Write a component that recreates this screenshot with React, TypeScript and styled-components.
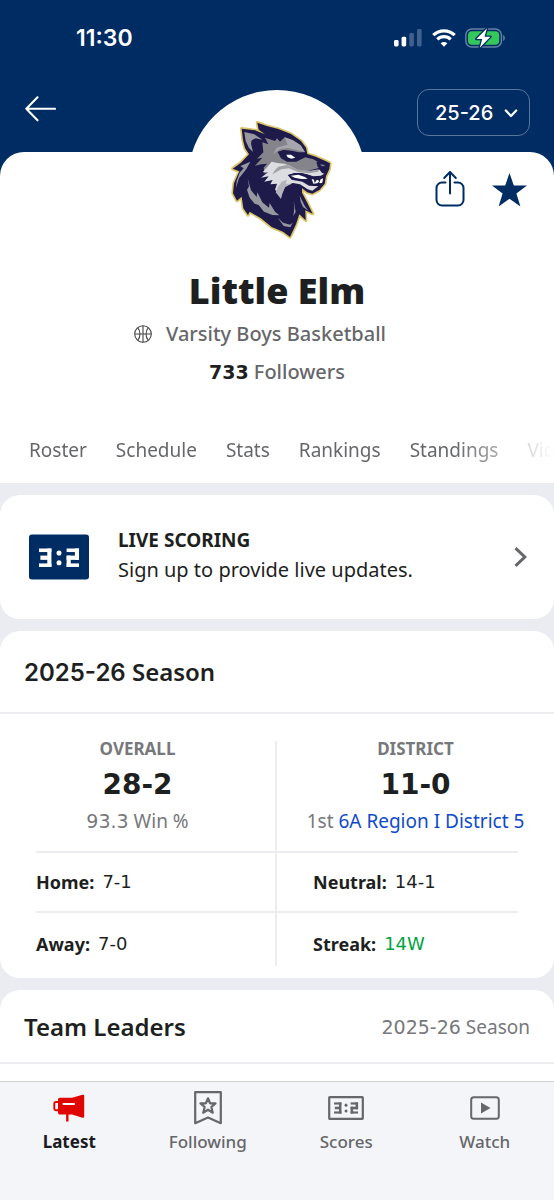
import React from "react";
import styled, { createGlobalStyle } from "styled-components";

const navy = "#002c64";
const ink = "#1e1f21";
const grey = "#66676a";
const softGrey = "#77787b";
const line = "#ededf1";
const backdrop = "#ebecf1";
const wideFigures = `"DejaVu Sans", sans-serif`;
const headingFigures = "Inter, sans-serif";

const GlobalStyle = createGlobalStyle`
  * { box-sizing: border-box; }
  body {
    margin: 0;
    background: ${backdrop};
    color: ${ink};
    font-family: "Noto Sans", "Open Sans", sans-serif;
    font-size: 18px;
    line-height: 24px;
  }
  h1, h2, p, dl, dt, dd { margin: 0; padding: 0; }
  button, select { font: inherit; color: inherit; }
  button { background: none; border: 0; padding: 0; cursor: pointer; }
  a { color: inherit; text-decoration: none; }
  svg { display: block; }
`;

const Page = styled.div`
  display: flex;
  flex-direction: column;
  min-height: 100vh;
`;

const Header = styled.header`
  background: ${navy};
  color: #fff;
`;

const StatusBar = styled.div`
  display: flex;
  align-items: center;
  justify-content: space-between;
  height: 76px;
  padding: 0 48px 0 76px;
`;

const Clock = styled.span`
  font-family: Inter, sans-serif;
  font-size: 23px;
  font-weight: 600;
`;

const StatusIcons = styled.div`
  display: flex;
  align-items: center;
  gap: 9px;
`;

const NavRow = styled.div`
  display: flex;
  align-items: flex-start;
  justify-content: space-between;
  height: 76px;
  padding: 13px 24px 0;
`;

const BackButton = styled.button`
  padding: 7px 0;
`;

const SeasonPicker = styled.label`
  display: flex;
  align-items: center;
  width: 113px;
  height: 47px;
  padding: 0 11px 0 17px;
  border: 1px solid #5a769c;
  border-radius: 12px;
`;

const SeasonSelect = styled.select`
  flex: 1;
  min-width: 0;
  padding: 0;
  border: 0;
  appearance: none;
  background: transparent;
  font-family: ${headingFigures};
  font-size: 20px;
  font-weight: 500;
`;

const HeroBackdrop = styled.div`
  background: linear-gradient(${navy} 50%, ${backdrop} 50%);
`;

const Hero = styled.section`
  padding-bottom: 16px;
  border-radius: 24px 24px 0 0;
  background: #fff;
  text-align: center;
`;

const HeroTop = styled.div`
  display: grid;
  grid-template-columns: 1fr 178px 1fr;
  height: 118px;
`;

const Crest = styled.div`
  grid-column: 2;
  width: 178px;
  height: 178px;
  margin-top: -62px;
  padding: 25px 0 0 37px;
  border-radius: 50%;
  background: #fff;
`;

const Actions = styled.div`
  display: flex;
  align-items: center;
  align-self: start;
  justify-content: flex-end;
  gap: 27px;
  padding: 18px 27px 0 0;
`;

const TeamName = styled.h1`
  font-size: 36px;
  font-weight: 900;
  line-height: 42px;
`;

const Sport = styled.p`
  display: flex;
  align-items: center;
  justify-content: center;
  gap: 14px;
  margin-top: 10px;
  padding-right: 34px;
  color: ${grey};
  font-size: 20px;
  font-weight: 500;
`;

const Followers = styled.p`
  margin-top: 14px;
  color: ${grey};
  font-size: 20px;
  font-weight: 500;

  strong {
    color: ${ink};
    font-family: ${wideFigures};
    font-size: 19px;
    font-weight: 700;
  }
`;

const Tabs = styled.nav`
  display: flex;
  gap: 29px;
  margin-top: 54px;
  padding: 0 0 5px 29px;
  overflow: hidden;
  color: ${grey};
  font-size: 19px;
  mask-image: linear-gradient(to right, #000 calc(100% - 100px), transparent);

  a { flex: none; }
`;

const Feed = styled.main`
  display: flex;
  flex: 1;
  flex-direction: column;
  gap: 12px;
  padding-top: 12px;
`;

const Card = styled.section<{ $last?: boolean }>`
  flex: ${(p) => (p.$last ? "1 0 auto" : "none")};
  border-radius: ${(p) => (p.$last ? "20px 20px 0 0" : "20px")};
  background: #fff;
`;

const LiveLink = styled.a`
  display: flex;
  align-items: center;
  gap: 29px;
  min-height: 124px;
  padding: 0 26px 0 29px;
`;

const LiveText = styled.div`
  flex: 1;
  padding-bottom: 4px;
  font-size: 20px;
  line-height: 30px;

  strong {
    display: block;
    font-size: 19px;
    font-weight: 700;
  }
`;

const CardHead = styled.div<{ $compact?: boolean }>`
  display: flex;
  align-items: center;
  justify-content: space-between;
  height: ${(p) => (p.$compact ? "74px" : "83px")};
  padding: 2px 24px 0;
  border-bottom: 2px solid ${line};
  color: ${softGrey};
`;

const CardTitle = styled.h2`
  color: ${ink};
  font-size: 24px;
  font-weight: 600;
  line-height: 32px;
`;

const HeadingFigures = styled.span`
  font-family: ${headingFigures};
`;

const Note = styled.span`
  font-size: 19px;

  a { color: #0f4bc8; }
`;

const Figures = styled.span`
  font-family: ${wideFigures};
`;

const Record = styled.div`
  display: grid;
  grid-template-columns: 1fr 1fr;
  padding: 27px 0 12px;
`;

const Column = styled.div<{ $side: "left" | "right" }>`
  padding: ${(p) => (p.$side === "left" ? "0 0 0 36px" : "0 36px 0 0")};
  border-right: ${(p) => (p.$side === "left" ? `2px solid ${line}` : "0")};
`;

const Summary = styled.div<{ $side: "left" | "right" }>`
  display: flex;
  flex-direction: column;
  align-items: center;
  height: 110px;
  margin: ${(p) => (p.$side === "left" ? "0 0 0 -36px" : "0 -36px 0 0")};
  color: ${softGrey};
  white-space: nowrap;
`;

const SummaryLabel = styled.span`
  font-size: 17px;
  font-weight: 700;
  line-height: 16px;
`;

const SummaryValue = styled.strong`
  margin: 9px 0 5px;
  color: ${ink};
  font-family: ${wideFigures};
  font-size: 28px;
  font-weight: 700;
  line-height: 38px;
`;

const Split = styled.dl<{ $side: "left" | "right" }>`
  display: flex;
  align-items: center;
  gap: 8px;
  height: 60px;
  padding-left: ${(p) => (p.$side === "left" ? "0" : "36px")};
  border-top: 2px solid ${line};

  &:last-child {
    height: 55px;
    padding-top: 9px;
  }

  dt { font-weight: 700; }
`;

const Result = styled.dd<{ $win?: boolean }>`
  color: ${(p) => (p.$win ? "#00a33e" : ink)};
  font-family: ${wideFigures};
`;

const TabBar = styled.nav`
  position: sticky;
  bottom: 0;
  display: grid;
  grid-template-columns: repeat(4, 1fr);
  height: 119px;
  padding-top: 8px;
  border-top: 1px solid #cfd0d4;
  background: #f4f5f8;
`;

const TabItem = styled.a<{ $active?: boolean }>`
  display: flex;
  flex-direction: column;
  align-items: center;
  gap: 5px;
  color: ${(p) => (p.$active ? "#1a1a1f" : grey)};
  font-size: 17px;
  font-weight: ${(p) => (p.$active ? 700 : 500)};
`;

const IconSlot = styled.span`
  display: flex;
  align-items: center;
  justify-content: center;
  height: 35px;
`;

/* Scoreboard digits: bars listed as x, y, width, height on a 9 x 13 face */
const THREE = [[0, 0, 9, 2.5], [6, 0, 3, 13], [1, 5, 6, 3], [0, 10.5, 9, 2.5]];
const TWO = [[0, 0, 9, 2.5], [6, 0, 3, 8], [0, 5, 9, 3], [0, 5, 3, 8], [0, 10.5, 9, 2.5]];

const Segments = ({ bars, x }: { bars: number[][]; x: number }) => (
  <g transform={`translate(${x} 0)`}>
    {bars.map(([bx, by, w, h], i) => <rect key={i} x={bx} y={by} width={w} height={h} />)}
  </g>
);

const ScoreFace = () => (
  <>
    <Segments bars={THREE} x={0} />
    <circle cx="14.5" cy="3.2" r="1.8" />
    <circle cx="14.5" cy="10" r="1.8" />
    <Segments bars={TWO} x={20} />
  </>
);

const ScoreBadge = () => (
  <svg width="60" height="46" viewBox="0 0 60 46" role="img" aria-label="Scoreboard">
    <rect y=".5" width="60" height="45" rx="3" fill={navy} />
    <g transform="translate(10 14.5) scale(1.38 1.42)" fill="#fff"><ScoreFace /></g>
  </svg>
);

const ScoresIcon = () => (
  <svg width="36" height="24" viewBox="0 0 36 24" fill="none" aria-hidden="true">
    <rect x="1.2" y="1.2" width="33.6" height="21.6" rx=".6" stroke={grey} strokeWidth="2.2" />
    <g transform="translate(6 6.4) scale(.83 .86)" fill={grey}><ScoreFace /></g>
  </svg>
);

const SignalIcon = () => (
  <svg width="29" height="18" viewBox="0 0 29 18" fill="#fff" aria-hidden="true">
    <rect x="0" y="11" width="4.6" height="6.5" rx="1.4" />
    <rect x="7.6" y="7.8" width="4.6" height="9.7" rx="1.4" />
    <rect x="15.3" y="4" width="4.6" height="13.5" rx="1.4" opacity=".25" />
    <rect x="23" y="0" width="4.6" height="17.5" rx="1.4" opacity=".25" />
  </svg>
);

const WifiIcon = () => (
  <svg width="24" height="18" viewBox="0 0 24 18" fill="none" stroke="#fff" strokeWidth="3.2" aria-hidden="true">
    <path d="M1.3 6.2a15.2 15.2 0 0 1 21.4 0" />
    <path d="M5.3 10.3a9.5 9.5 0 0 1 13.4 0" />
    <path d="M12 17.8l-3.4-3.5a4.9 4.9 0 0 1 6.8 0z" fill="#fff" stroke="none" />
  </svg>
);

const BatteryIcon = () => (
  <svg width="41" height="20" viewBox="0 0 41 20" fill="none" aria-hidden="true">
    <rect x=".8" y="1" width="35.6" height="18" rx="6" stroke="#6580a3" strokeWidth="1.5" />
    <path d="M38.2 7v6c2.2-.8 2.2-5.2 0-6z" fill="#6580a3" />
    <rect x="3" y="3.2" width="31.2" height="13.6" rx="4" fill="#34c759" />
    <path d="M22 .2L11.4 11h5.8l-2.4 8.8L25.4 8.7h-5.9z" fill="#fff" stroke={navy} strokeWidth="2.6" strokeLinejoin="round" paintOrder="stroke" />
  </svg>
);

const BackIcon = () => (
  <svg width="32" height="26" viewBox="0 0 32 26" fill="none" stroke="#fff" strokeWidth="2.1" strokeLinecap="round" strokeLinejoin="round" aria-hidden="true">
    <path d="M31 12.8H2.3M13.5 1.3L2.3 12.8l11.2 11.5" />
  </svg>
);

const DownIcon = () => (
  <svg width="14" height="10" viewBox="0 0 14 10" fill="none" stroke="#fff" strokeWidth="2.3" strokeLinecap="round" strokeLinejoin="round" aria-hidden="true">
    <path d="M1.8 2.5L7 8l5.2-5.5" />
  </svg>
);

const ShareIcon = () => (
  <svg width="30" height="38" viewBox="0 0 30 38" fill="none" stroke={navy} strokeWidth="2" strokeLinecap="round" strokeLinejoin="round" aria-hidden="true">
    <path d="M10.5 12.5H7A5.500 5.500 0 0 0 1.500 18v12A5.500 5.500 0 0 0 7 35.500h16a5.500 5.500 0 0 0 5.500-5.500V18a5.500 5.500 0 0 0-5.500-5.500h-3.500" />
    <path d="M15 23.5V2M9.200 8L15 2l5.800 6" />
  </svg>
);

const StarIcon = () => (
  <svg width="35" height="36" viewBox="0 0 35 36" fill={navy} aria-hidden="true">
    <path d="M17.500 2l4.300 12.600H35L24.400 22.500l4 13.100-10.900-7.900-10.900 7.900 4-13.100L0 14.600h13.200z" />
  </svg>
);

const BallIcon = () => (
  <svg width="18" height="18" viewBox="0 0 18 18" fill="none" stroke="#444548" strokeWidth="1.1" aria-hidden="true">
    <circle cx="9" cy="9" r="8.3" />
    <path d="M9 .7v16.600M.7 9h16.600M3.800 2.800c2.900 3.200 2.900 9.200 0 12.400M14.200 2.800c-2.900 3.200-2.900 9.200 0 12.400" />
  </svg>
);

const NextIcon = () => (
  <svg width="14" height="20" viewBox="0 0 14 20" fill="none" stroke={grey} strokeWidth="3" aria-hidden="true">
    <path d="M1.5 1.2l9.300 8.800-9.300 8.800" />
  </svg>
);

const MegaphoneIcon = () => (
  <svg width="32" height="28" viewBox="0 0 32 28" fill="none" aria-hidden="true">
    <path d="M6 8H2.800a1.500 1.500 0 0 0-1.500 1.500v5.300a1.500 1.500 0 0 0 1.500 1.500H6" stroke="#e10500" strokeWidth="1.9" />
    <path d="M6.800 3.800H19L29.500.8a1.300 1.300 0 0 1 1.700 1.200v20.500a1.300 1.300 0 0 1-1.700 1.200L19 20.500H6.800A1.800 1.800 0 0 1 5 18.700V5.600a1.800 1.800 0 0 1 1.800-1.800z" fill="#e10500" />
    <path d="M10.500 10h10.500" stroke="#fff" strokeWidth="2.2" strokeLinecap="round" />
    <path d="M14.300 20v7.500" stroke="#e10500" strokeWidth="2.4" />
  </svg>
);

const FollowingIcon = () => (
  <svg width="28" height="34" viewBox="0 0 28 34" fill="none" stroke={grey} strokeWidth="2.2" strokeLinejoin="round" aria-hidden="true">
    <path d="M1.200 1.200h25.600v31L14 26.500 1.200 32.200z" />
    <path d="M14 7.300l2.100 5h5.400l-4.200 3.700 1.500 5.700-4.800-3-4.800 3 1.500-5.700-4.200-3.700h5.400z" />
  </svg>
);

const WatchIcon = () => (
  <svg width="30" height="24" viewBox="0 0 30 24" fill="none" aria-hidden="true">
    <rect x="1.2" y="1.2" width="27.6" height="21.6" rx="2.5" stroke={grey} strokeWidth="2" />
    <path d="M11 6.500v11l9.500-5.500z" fill={grey} />
  </svg>
);

const WolfCrest = () => (
  <svg width="112" height="128" viewBox="0 0 336 384" role="img" aria-label="Little Elm wolf mascot">
    <path
      d="M50 41L90 46L120 58L101 44L97 23L125 33L160 42L198 57L228 78L243 98L247 117L272 125L300 137L315 145L313 162L303 183L299 206L284 224L262 236L247 232L231 220L231 233L246 262L263 296L241 286L242 316L223 298L213 328L195 366L174 350L140 336L108 310L74 290L69 300L55 280L50 245L36 257L24 235L27 205L43 169L23 161L48 143L72 118L60 99L54 75Z"
      fill="#1e1b4b" stroke="#dcc467" strokeWidth="10" strokeLinejoin="round" paintOrder="stroke"
    />
    <g fill="#9899a0">
      <path d="M58 51L88 58L112 74L92 70L80 76L78 86L84 111L72 99L62 78Z" />
      <path d="M46 153L76 140L64 162L42 190L33 219L35 198L44 173L56 160Z" />
      <path d="M68 190L78 226L95 246L97 232L112 262L132 278L134 264L150 290L163 301L142 300L117 290L101 270L89 266L74 248L66 224L72 214Z" />
      <path d="M158 308L174 323L195 329L203 323L196 337L176 333Z" />
      <path d="M224 242L239 272L250 287L234 276L227 260Z" />
      <path d="M206 258L212 290L205 304L208 280Z" />
    </g>
    <path d="M112 82L130 88L120 68L150 78L156 70L165 80L179 67L204 76L227 91L240 112L221 112L200 107L176 105L158 111L168 130L186 140L214 140L241 127L265 133L278 140L284 158L256 166L221 164L187 150L155 156L119 176L116 158L126 146L108 148L90 152L112 128L96 131L115 112Z" fill="#85848a" />
    <path d="M179 67L204 76L227 91L240 111L211 104L188 99L165 102L145 118L155 98L188 89Z" fill="#a6a6ac" />
    <path d="M140 140L157 144L178 146L195 152L219 164L258 168L284 164L291 174L298 176L288 182L265 184L245 178L214 174L188 180L200 194L232 200L252 212L280 214L262 227L248 223L225 208L204 204L182 212L168 240L150 224L156 206L136 208L143 195L118 200L131 184L108 188L129 172L113 172Z" fill="#dcdde0" />
    <path d="M160 155L186 150L218 163L257 167L281 163L280 170L252 175L219 171L192 160L169 163L142 178L151 164Z" fill="#a0a0a5" />
    <path d="M170 200L186 194L182 206L200 206L180 217L172 236L168 252L152 232L159 216Z" fill="#b4b5bc" />
    <path d="M160 110L174 106L200 109L222 116L246 119L234 127L218 127L212 134L196 134L182 129L172 119Z" fill="#1e1b4b" />
    <path d="M184 119L198 119L211 128L199 131L188 127Z" fill="#fff" />
    <path d="M190 180L208 174L231 174L249 179L266 186L300 181L299 204L284 212L264 208L250 198L234 196L211 191Z" fill="#1e1b4b" />
    <path d="M197 182L220 179L240 186L248 192L229 192L209 188Z" fill="#fff" />
    <path d="M260 192L267 194L269 204L275 195L280 195L283 203L287 193L294 190L292 203L285 205L281 201L276 205L265 206Z" fill="#fff" />
    <path d="M274 140L291 142L309 149L307 160L294 166L284 162L278 155Z" fill="#1e1b4b" />
    <path d="M285 148L297 149L301 153L290 154Z" fill="#77768d" />
  </svg>
);

const sections = ["Roster", "Schedule", "Stats", "Rankings", "Standings", "Videos"];

const tabItems = [
  { label: "Latest", icon: <MegaphoneIcon /> },
  { label: "Following", icon: <FollowingIcon /> },
  { label: "Scores", icon: <ScoresIcon /> },
  { label: "Watch", icon: <WatchIcon /> },
];

export default function App() {
  return (
    <Page>
      <GlobalStyle />
      <Header>
        <StatusBar>
          <Clock>11:30</Clock>
          <StatusIcons><SignalIcon /><WifiIcon /><BatteryIcon /></StatusIcons>
        </StatusBar>
        <NavRow>
          <BackButton aria-label="Back"><BackIcon /></BackButton>
          <SeasonPicker>
            <SeasonSelect aria-label="Season"><option>25-26</option></SeasonSelect>
            <DownIcon />
          </SeasonPicker>
        </NavRow>
      </Header>

      <HeroBackdrop>
        <Hero>
          <HeroTop>
            <Crest><WolfCrest /></Crest>
            <Actions>
              <button aria-label="Share"><ShareIcon /></button>
              <button aria-label="Unfollow"><StarIcon /></button>
            </Actions>
          </HeroTop>
          <TeamName>Little Elm</TeamName>
          <Sport><BallIcon />Varsity Boys Basketball</Sport>
          <Followers><strong>733</strong> Followers</Followers>
          <Tabs>
            {sections.map((name) => <a key={name} href={`#${name.toLowerCase()}`}>{name}</a>)}
          </Tabs>
        </Hero>
      </HeroBackdrop>

      <Feed>
        <Card>
          <LiveLink href="#live-scoring">
            <ScoreBadge />
            <LiveText>
              <strong>LIVE SCORING</strong>
              Sign up to provide live updates.
            </LiveText>
            <NextIcon />
          </LiveLink>
        </Card>

        <Card>
          <CardHead>
            <CardTitle><HeadingFigures>2025-26</HeadingFigures> Season</CardTitle>
          </CardHead>
          <Record>
            <Column $side="left">
              <Summary $side="left">
                <SummaryLabel>OVERALL</SummaryLabel>
                <SummaryValue>28-2</SummaryValue>
                <Note><Figures>93.3</Figures> Win %</Note>
              </Summary>
              <Split $side="left"><dt>Home:</dt><Result>7-1</Result></Split>
              <Split $side="left"><dt>Away:</dt><Result>7-0</Result></Split>
            </Column>
            <Column $side="right">
              <Summary $side="right">
                <SummaryLabel>DISTRICT</SummaryLabel>
                <SummaryValue>11-0</SummaryValue>
                <Note>1st <a href="#district">6A Region I District 5</a></Note>
              </Summary>
              <Split $side="right"><dt>Neutral:</dt><Result>14-1</Result></Split>
              <Split $side="right"><dt>Streak:</dt><Result $win>14W</Result></Split>
            </Column>
          </Record>
        </Card>

        <Card $last>
          <CardHead $compact>
            <CardTitle>Team Leaders</CardTitle>
            <Note><Figures>2025-26</Figures> Season</Note>
          </CardHead>
        </Card>
      </Feed>

      <TabBar>
        {tabItems.map((item, i) => (
          <TabItem key={item.label} href={`#${item.label.toLowerCase()}`} $active={i === 0}>
            <IconSlot>{item.icon}</IconSlot>
            {item.label}
          </TabItem>
        ))}
      </TabBar>
    </Page>
  );
}
